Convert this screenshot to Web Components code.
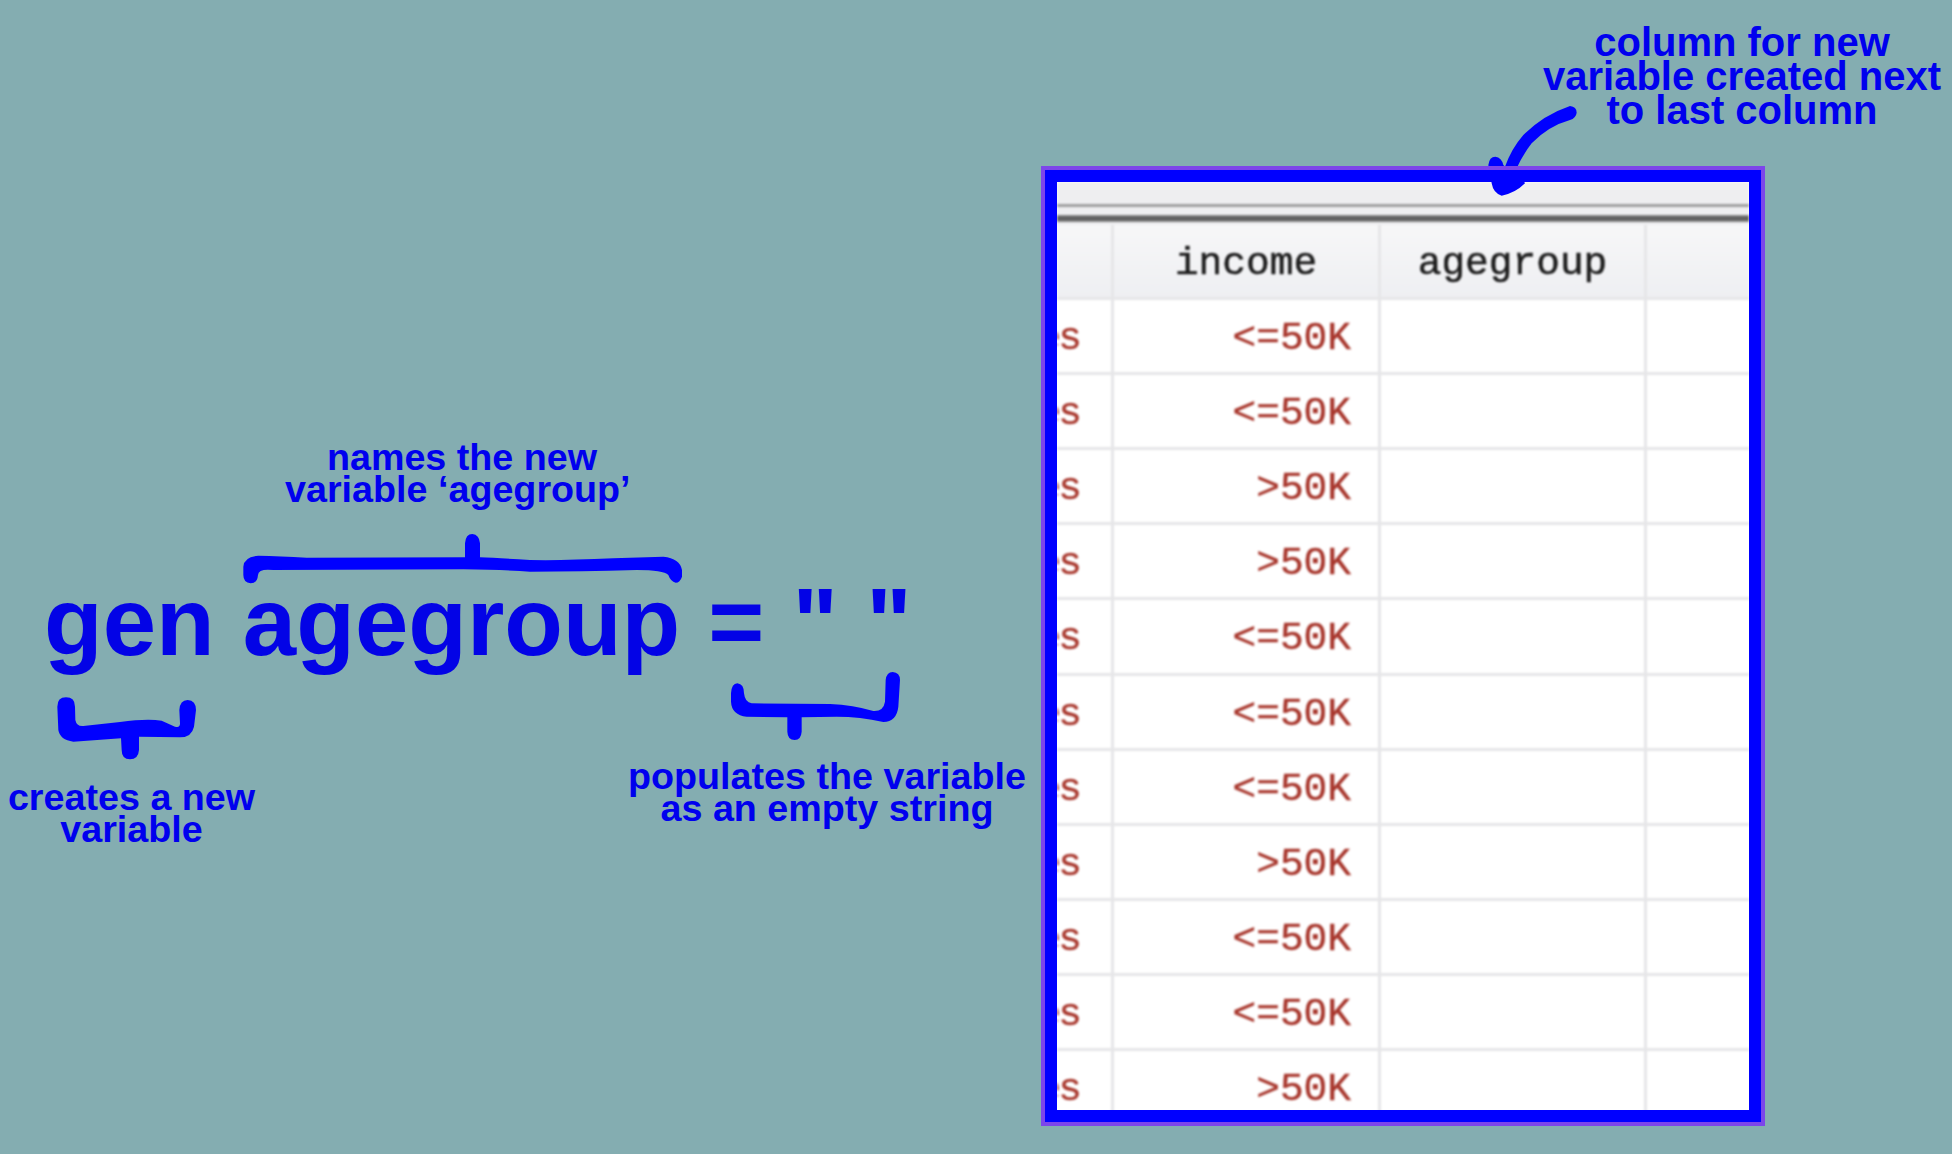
<!DOCTYPE html>
<html lang="en">
<head>
<meta charset="utf-8">
<title>gen agegroup</title>
<style>
html,body{margin:0;padding:0;background:#84adb1;}
body{width:1952px;height:1154px;overflow:hidden;font-family:"Liberation Sans",Arial,sans-serif;}
</style>
</head>
<body>
<annot-stage>
  <code-line>gen agegroup = " "</code-line>

  <note-label x="462" y="441" size="37.7" lh="32">names the new
variable ‘agegroup’ </note-label>
  <note-label x="131.5" y="781" size="37.7" lh="32">creates a new
variable</note-label>
  <note-label x="827" y="760" size="37.7" lh="32">populates the variable
as an empty string</note-label>
  <note-label x="1742" y="25" size="40" lh="34">column for new
variable created next
to last column</note-label>

  <hand-mark x="230" y="520" w="480" h="80" vb="0 0 1440 240" d="M40,165 L40,140 Q42,110 85,107 Q150,108 230,113 L705,112 L705,70 Q707,42 727,42 Q748,44 750,70 L750,112 Q800,114 900,120 Q1000,122 1150,115 L1300,110 Q1350,115 1356,150 L1356,170 Q1350,188 1337,188 Q1322,185 1315,165 Q1300,150 1220,150 Q1050,155 900,155 Q830,150 700,148 L130,150 Q85,145 84,165 Q82,190 62,190 Q40,188 40,165 Z"></hand-mark>
  <hand-mark x="40" y="680" w="180" h="100" vb="0 0 540 300" d="M52,80 Q52,52 78,52 Q105,52 105,80 L106,120 Q110,140 130,138 L240,126 Q320,115 365,122 L405,140 Q420,145 420,130 L418,90 Q420,60 443,60 Q468,62 468,90 L462,140 Q455,172 420,172 L297,170 L297,210 Q295,238 270,238 Q245,238 245,210 L243,175 L100,185 Q60,180 55,150 Z"></hand-mark>
  <hand-mark x="720" y="660" w="200" h="100" vb="0 0 600 300" d="M33,100 Q35,70 52,70 Q72,72 72,100 Q75,128 95,130 L330,132 Q400,135 460,153 Q490,155 495,125 L497,60 Q500,36 518,36 Q540,38 540,60 L535,140 Q530,185 490,186 Q420,170 350,170 L245,172 L245,215 Q243,240 224,240 Q203,240 202,215 L202,172 L80,170 Q35,165 33,125 Z"></hand-mark>

  <sheet-panel>
    <sheet-head></sheet-head>
    <sheet-row clip="es" income="&lt;=50K"></sheet-row>
    <sheet-row clip="es" income="&lt;=50K"></sheet-row>
    <sheet-row clip="es" income="&gt;50K"></sheet-row>
    <sheet-row clip="es" income="&gt;50K"></sheet-row>
    <sheet-row clip="es" income="&lt;=50K"></sheet-row>
    <sheet-row clip="es" income="&lt;=50K"></sheet-row>
    <sheet-row clip="es" income="&lt;=50K"></sheet-row>
    <sheet-row clip="es" income="&gt;50K"></sheet-row>
    <sheet-row clip="es" income="&lt;=50K"></sheet-row>
    <sheet-row clip="es" income="&lt;=50K"></sheet-row>
    <sheet-row clip="es" income="&gt;50K"></sheet-row>
  </sheet-panel>

  <hand-mark x="1470" y="90" w="130" h="120" vb="0 0 390 360" band="1" d="M300,48 Q320,50 320,68 Q318,84 300,90 Q235,108 185,160 Q158,195 140,235 L165,280 Q135,310 95,317 Q70,310 65,280 L55,225 Q58,200 76,200 Q95,202 100,225 L105,230 Q125,175 160,135 Q220,75 300,48 Z"></hand-mark>
</annot-stage>

<script>
const COLS = '54px 3px 264px 3px 263px 3px 1fr';

class AnnotStage extends HTMLElement {
  constructor() {
    super();
    this.attachShadow({mode: 'open'}).innerHTML = `<style>
        :host{display:flex;align-items:flex-start;position:relative;width:1952px;height:1154px;box-sizing:border-box;padding:166px 0 0 1041px;}
      </style><slot></slot>`;
  }
}

class CodeLine extends HTMLElement {
  constructor() {
    super();
    this.attachShadow({mode: 'open'}).innerHTML = `<style>
        :host{display:block;position:absolute;left:44px;top:567px;font:700 96px/110px "Liberation Sans",Arial,sans-serif;word-spacing:1.5px;color:#0303e6;white-space:pre;filter:blur(.5px);}
      </style><slot></slot>`;
  }
}

class NoteLabel extends HTMLElement {
  constructor() {
    super();
    this.attachShadow({mode: 'open'}).innerHTML = `<style>
        :host{display:block;position:absolute;transform:translateX(-50%);text-align:center;white-space:pre;font-family:"Liberation Sans",Arial,sans-serif;font-weight:700;color:#0000ee;}
      </style><slot></slot>`;
  }
  connectedCallback() {
    const a = n => this.getAttribute(n);
    this.style.left = a('x') + 'px';
    this.style.top = a('y') + 'px';
    this.style.fontSize = a('size') + 'px';
    this.style.lineHeight = a('lh') + 'px';
  }
}

class HandMark extends HTMLElement {
  connectedCallback() {
    const a = n => this.getAttribute(n);
    const band = a('band') ? '<rect x="40" y="228" width="140" height="12" fill="#7d45ea"/>' : '';
    this.attachShadow({mode: 'open'}).innerHTML = `<style>
        :host{display:block;position:absolute;left:${a('x')}px;top:${a('y')}px;width:${a('w')}px;height:${a('h')}px;line-height:0;}
        svg{display:block;width:100%;height:100%;}
      </style><svg viewBox="${a('vb')}" aria-hidden="true"><path d="${a('d')}" fill="#0000ff"/>${band}</svg>`;
  }
}

class SheetPanel extends HTMLElement {
  constructor() {
    super();
    this.attachShadow({mode: 'open'}).innerHTML = `<style>
        :host{display:block;flex:none;box-sizing:border-box;width:724px;height:960px;border:4px solid #7d45ea;background:#0000ff;padding:12px 12px 12px;}
        .clip{height:100%;overflow:hidden;background:#fff;}
        .soft{filter:blur(.8px);}
        .strip{height:43px;background:#eeeef0;display:flex;flex-direction:column;}
        .l1{margin-top:22px;height:3px;background:#a0a0a1;}
        .l2{margin-top:8px;height:7px;background:linear-gradient(#8f8f8f,#555 50%,#8f8f8f);}
      </style><div class="clip"><div class="soft"><div class="strip"><div class="l1"></div><div class="l2"></div></div><slot></slot></div></div>`;
  }
}

const cellCss = `
  .grid{display:grid;grid-template-columns:${COLS};height:75.1px;box-sizing:border-box;border-bottom:3px solid #e6e6e8;
    font:400 39.5px/72px "Liberation Mono","Courier New",monospace;}
  .v{background:#e6e6e8;}
  .t{white-space:pre;overflow:hidden;box-sizing:border-box;padding-top:3px;}
`;

class SheetHead extends HTMLElement {
  constructor() {
    super();
    this.attachShadow({mode: 'open'}).innerHTML = `<style>
        :host{display:block;background:linear-gradient(#f7f7f8,#eeeff2);color:#1c1c1c;}
        ${cellCss}
        .t{text-align:center;-webkit-text-stroke:.5px #1c1c1c;}
      </style><div class="grid"><div class="t"></div><div class="v"></div><div class="t">income</div><div class="v"></div><div class="t">agegroup</div><div class="v"></div><div class="t"></div></div>`;
  }
}

class SheetRow extends HTMLElement {
  connectedCallback() {
    this.attachShadow({mode: 'open'}).innerHTML = `<style>
        :host{display:block;background:#fff;color:#a8362c;}
        ${cellCss}
        .t{-webkit-text-stroke:.4px #a8362c;}
        .c{text-align:right;padding-right:27px;}
        .first{text-align:right;padding-right:32px;direction:rtl;letter-spacing:-3px;}
      </style><div class="grid"><div class="t first"><bdi class="a"></bdi></div><div class="v"></div><div class="t c b"></div><div class="v"></div><div class="t"></div><div class="v"></div><div class="t"></div></div>`;
    this.shadowRoot.querySelector('.a').textContent = this.getAttribute('clip');
    this.shadowRoot.querySelector('.b').textContent = this.getAttribute('income');
  }
}

customElements.define('annot-stage', AnnotStage);
customElements.define('code-line', CodeLine);
customElements.define('note-label', NoteLabel);
customElements.define('hand-mark', HandMark);
customElements.define('sheet-panel', SheetPanel);
customElements.define('sheet-head', SheetHead);
customElements.define('sheet-row', SheetRow);
</script>
</body>
</html>
